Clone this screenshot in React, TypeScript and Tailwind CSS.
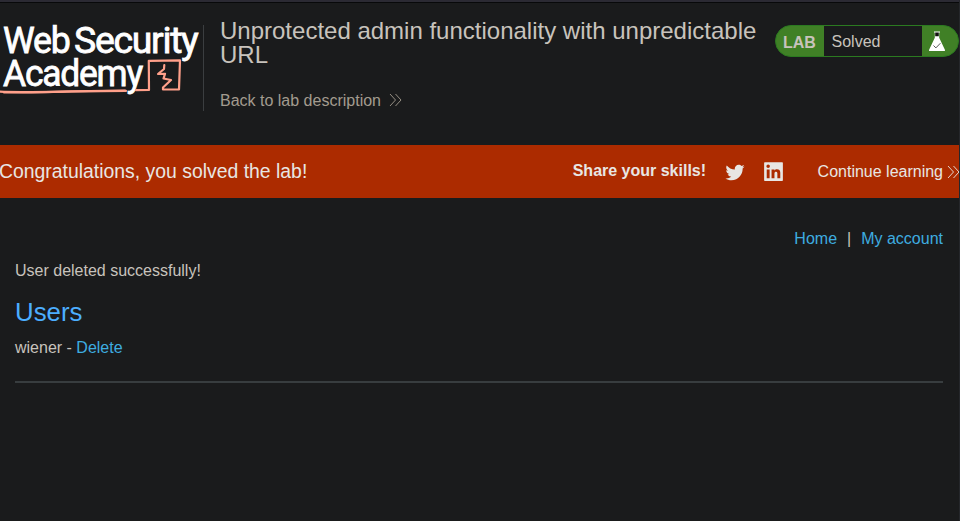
import React from 'react';

function Chevrons({ className }: { className: string }) {
  return (
    <svg className={className} viewBox="0 0 13 14" fill="none" stroke="currentColor" strokeWidth="0.9">
      <path d="M1 1l5.500 6L1 13M6.500 1l5.500 6-5.500 6" />
    </svg>
  );
}

function Logo() {
  return (
    <svg className="h-[86px] w-[203px] shrink-0 overflow-visible" viewBox="0 25 203 86">
      <g
        fill="#fff"
        stroke="#fff"
        strokeWidth="0.8"
        fontFamily="Roboto, sans-serif"
        fontSize="37.500"
        fontWeight="400"
        letterSpacing="-1.300"
      >
        <text x="3" y="53.200" textLength="66.500" lengthAdjust="spacingAndGlyphs">Web</text>
        <text x="74" y="53.200" textLength="123.500" lengthAdjust="spacingAndGlyphs">Security</text>
        <text x="3" y="86" textLength="139" lengthAdjust="spacingAndGlyphs">Academy</text>
      </g>
      <g fill="none" stroke="#ffa08a" strokeWidth="2.200" strokeLinejoin="round" strokeLinecap="round">
        <path d="M0 91.700 C25 93 75 91 126 90.900M136 90.200 L149 90 L148.800 60.800 L180 60.300 L179 89.500 L163 89.500 L163 87.500 L171 80 L163.500 78.500 L165 73.800 L158 74 L164 69 L164.300 65" />
        <path d="M4 92.400 C40 92.700 80 90.500 125 90.500" />
      </g>
    </svg>
  );
}

function LabStatus() {
  return (
    <div className="mt-[22px] ml-auto flex h-8 w-[184px] shrink-0 overflow-hidden rounded-full border border-[#2b7a20] bg-[#408026]">
      <span className="w-12 pt-[5px] pl-[7px] text-base leading-6 font-bold text-[#c8c3bc]">LAB</span>
      <span className="w-[98px] bg-[#1a1b1c] pt-1 pl-[7.500px] text-base leading-6">Solved</span>
      <svg className="mt-[4px] ml-[6px] h-[22px] w-[18px]" viewBox="0 0 18 22">
        <path d="M6 1.500h6v1h-.8v5.200l5.700 12c.3.800 0 1.300-.8 1.300H1.900c-.8 0-1.100-.5-.8-1.300l5.700-12V2.500H6z" fill="#fff" />
        <path d="M7.200 2.500h3.600v3.800H7.200z" fill="#10130e" />
        <path d="M5.500 15.500l2.400 2.400 4.500-4.700" fill="none" stroke="#555" strokeWidth="1" />
      </svg>
    </div>
  );
}

export default function App() {
  return (
    <div className="h-[521px] w-full overflow-hidden border-r border-[#25272b] bg-[#1a1b1c] font-['Liberation_Sans',Arial,sans-serif] text-base text-[#c8c3bc]">
      <div className="h-[3px] border-b border-[#08090a] bg-[#2b2a33]" />
      <header className="flex h-[142px]">
        <div className="mt-[22px] h-[86px] w-[204px] shrink-0 border-r border-[#3b3e40]">
          <Logo />
        </div>
        <div className="w-[560px] shrink-0 pt-4 pl-4">
          <h1 className="text-2xl leading-6 font-normal">Unprotected admin functionality with unpredictable URL</h1>
          <a className="mt-[22px] flex items-center text-base leading-6 text-[#a39b8f]">
            Back to lab description
            <Chevrons className="-mt-[2px] ml-2 h-[14px] w-[13px]" />
          </a>
        </div>
        <LabStatus />
      </header>
      <section className="flex h-[53px] items-center bg-[#ac2b00] text-[#e8e6e3]">
        <p className="-mt-[2px] -ml-px text-[19.400px] leading-6">Congratulations, you solved the lab!</p>
        <div className="-mr-px ml-auto flex items-center">
          <span className="mr-[17.500px] -mt-[2px] leading-6 font-bold">Share your skills!</span>
          <svg className="h-[22px] w-[22px]" viewBox="0 0 24 24" fill="currentColor">
            <path d="M22.460 6c-.77.350-1.600.580-2.460.690.880-.53 1.560-1.370 1.880-2.380-.83.500-1.750.850-2.720 1.050C18.370 4.500 17.260 4 16 4c-2.350 0-4.270 1.920-4.270 4.290 0 .340.040.670.110.980C8.280 9.090 5.110 7.380 3 4.790c-.37.630-.58 1.370-.58 2.150 0 1.490.750 2.810 1.910 3.560-.71 0-1.370-.2-1.950-.5v.030c0 2.080 1.480 3.820 3.440 4.210a4.220 4.220 0 0 1-1.930.070 4.280 4.280 0 0 0 4 2.980 8.521 8.521 0 0 1-5.330 1.840q-.51 0-1.020-.06C3.440 20.290 5.700 21 8.120 21 16 21 20.330 14.460 20.330 8.790c0-.19 0-.37-.01-.56.840-.6 1.560-1.360 2.140-2.230z" />
          </svg>
          <svg className="ml-[15.500px] h-[25px] w-[25px]" viewBox="0 0 24 24" fill="currentColor">
            <path d="M20.300 3q.7 0 .7.700v16.600q0 .7-.7.700H3.700q-.7 0-.7-.7V3.700q0-.7.700-.7h16.600m-1.800 15.500v-5.300a3.260 3.260 0 0 0-3.260-3.260c-.85 0-1.840.520-2.320 1.300v-1.110h-2.790v8.370h2.790v-4.930c0-.77.620-1.400 1.390-1.400a1.400 1.400 0 0 1 1.400 1.400v4.930h2.790M6.880 8.560a1.680 1.680 0 0 0 1.680-1.680c0-.93-.75-1.690-1.680-1.690a1.690 1.690 0 0 0-1.690 1.690c0 .930.760 1.680 1.690 1.680m1.390 9.940v-8.370H5.500v8.370h2.770z" />
          </svg>
          <a className="ml-[31.500px] flex items-center leading-6">
            Continue learning
            <Chevrons className="ml-1 h-[14px] w-[13px]" />
          </a>
        </div>
      </section>
      <main className="pr-4 pl-[15px]">
        <nav className="flex justify-end gap-[10px] pt-[29px] leading-6 text-[#3eade0]">
          <a>Home</a>
          <span className="text-[#c8c3bc]">|</span>
          <a>My account</a>
        </nav>
        <p className="mt-2 leading-6">User deleted successfully!</p>
        <h2 className="mt-[13px] text-[25.800px] leading-8 text-[#4caeff]">Users</h2>
        <p className="mt-2 leading-6">
          wiener - <a className="text-[#3eade0]">Delete</a>
        </p>
        <hr className="mt-[21px] h-[2px] border-0 bg-[#383d3f]" />
      </main>
    </div>
  );
}
